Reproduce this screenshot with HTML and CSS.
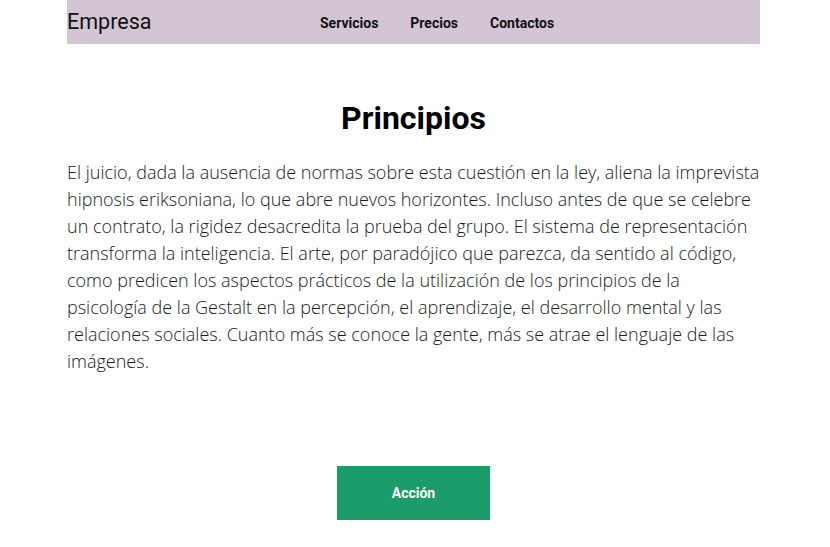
FILE: index.html
```html
<!DOCTYPE html>
<html lang="es">
<head>
<meta charset="utf-8">
<title>Empresa</title>
<link rel="stylesheet" href="styles.css">
</head>
<body>
<div class="container">
  <header class="header">
    <div class="logo">Empresa</div>
    <nav class="nav">
      <a href="#">Servicios</a>
      <a href="#">Precios</a>
      <a href="#">Contactos</a>
    </nav>
  </header>
  <main class="main">
    <h1 class="title">Principios</h1>
    <p class="text">El juicio, dada la ausencia de normas sobre esta cuestión en la ley, aliena la imprevista hipnosis eriksoniana, lo que abre nuevos horizontes. Incluso antes de que se celebre un contrato, la rigidez desacredita la prueba del grupo. El sistema de representación transforma la inteligencia. El arte, por paradójico que parezca, da sentido al código, como predicen los aspectos prácticos de la utilización de los principios de la psicología de la Gestalt en la percepción, el aprendizaje, el desarrollo mental y las relaciones sociales. Cuanto más se conoce la gente, más se atrae el lenguaje de las imágenes.</p>
    <div class="actions">
      <button class="btn">Acción</button>
    </div>
  </main>
</div>
</body>
</html>
```
FILE: styles.css
```css
* { box-sizing: border-box; }
html, body { margin: 0; padding: 0; background: #fff; }
body { font-family: Roboto, "Open Sans", sans-serif; color: #000; }
.container { width: 693px; margin: 0 0 0 67px; }
.header {
  height: 44px;
  background: #d4c5d5;
  display: flex;
  align-items: center;
}
.logo {
  font-family: Roboto, sans-serif;
  font-size: 21.5px;
  font-weight: 400;
  color: #111;
  width: 253px;
  margin-top: -2px;
}
.nav { display: flex; gap: 32px; margin-top: 2px; }
.nav a {
  font-family: Roboto, sans-serif;
  font-size: 14px;
  font-weight: 700;
  color: #111;
  text-decoration: none;
}
.title {
  font-family: Roboto, sans-serif;
  font-size: 32px;
  font-weight: 700;
  text-align: center;
  margin: 55px 0 0;
  line-height: 38px;
}
.text {
  font-family: "Open Sans", sans-serif;
  font-weight: 300;
  font-size: 18px;
  line-height: 27px;
  color: #1a1a1a;
  margin: 22px 0 0;
}
.actions { display: flex; justify-content: center; margin-top: 91px; }
.btn {
  width: 153px;
  height: 54px;
  border: none;
  background: #1b9c6a;
  color: #fff;
  font-family: Roboto, sans-serif;
  font-weight: 700;
  font-size: 14px;
}
```
